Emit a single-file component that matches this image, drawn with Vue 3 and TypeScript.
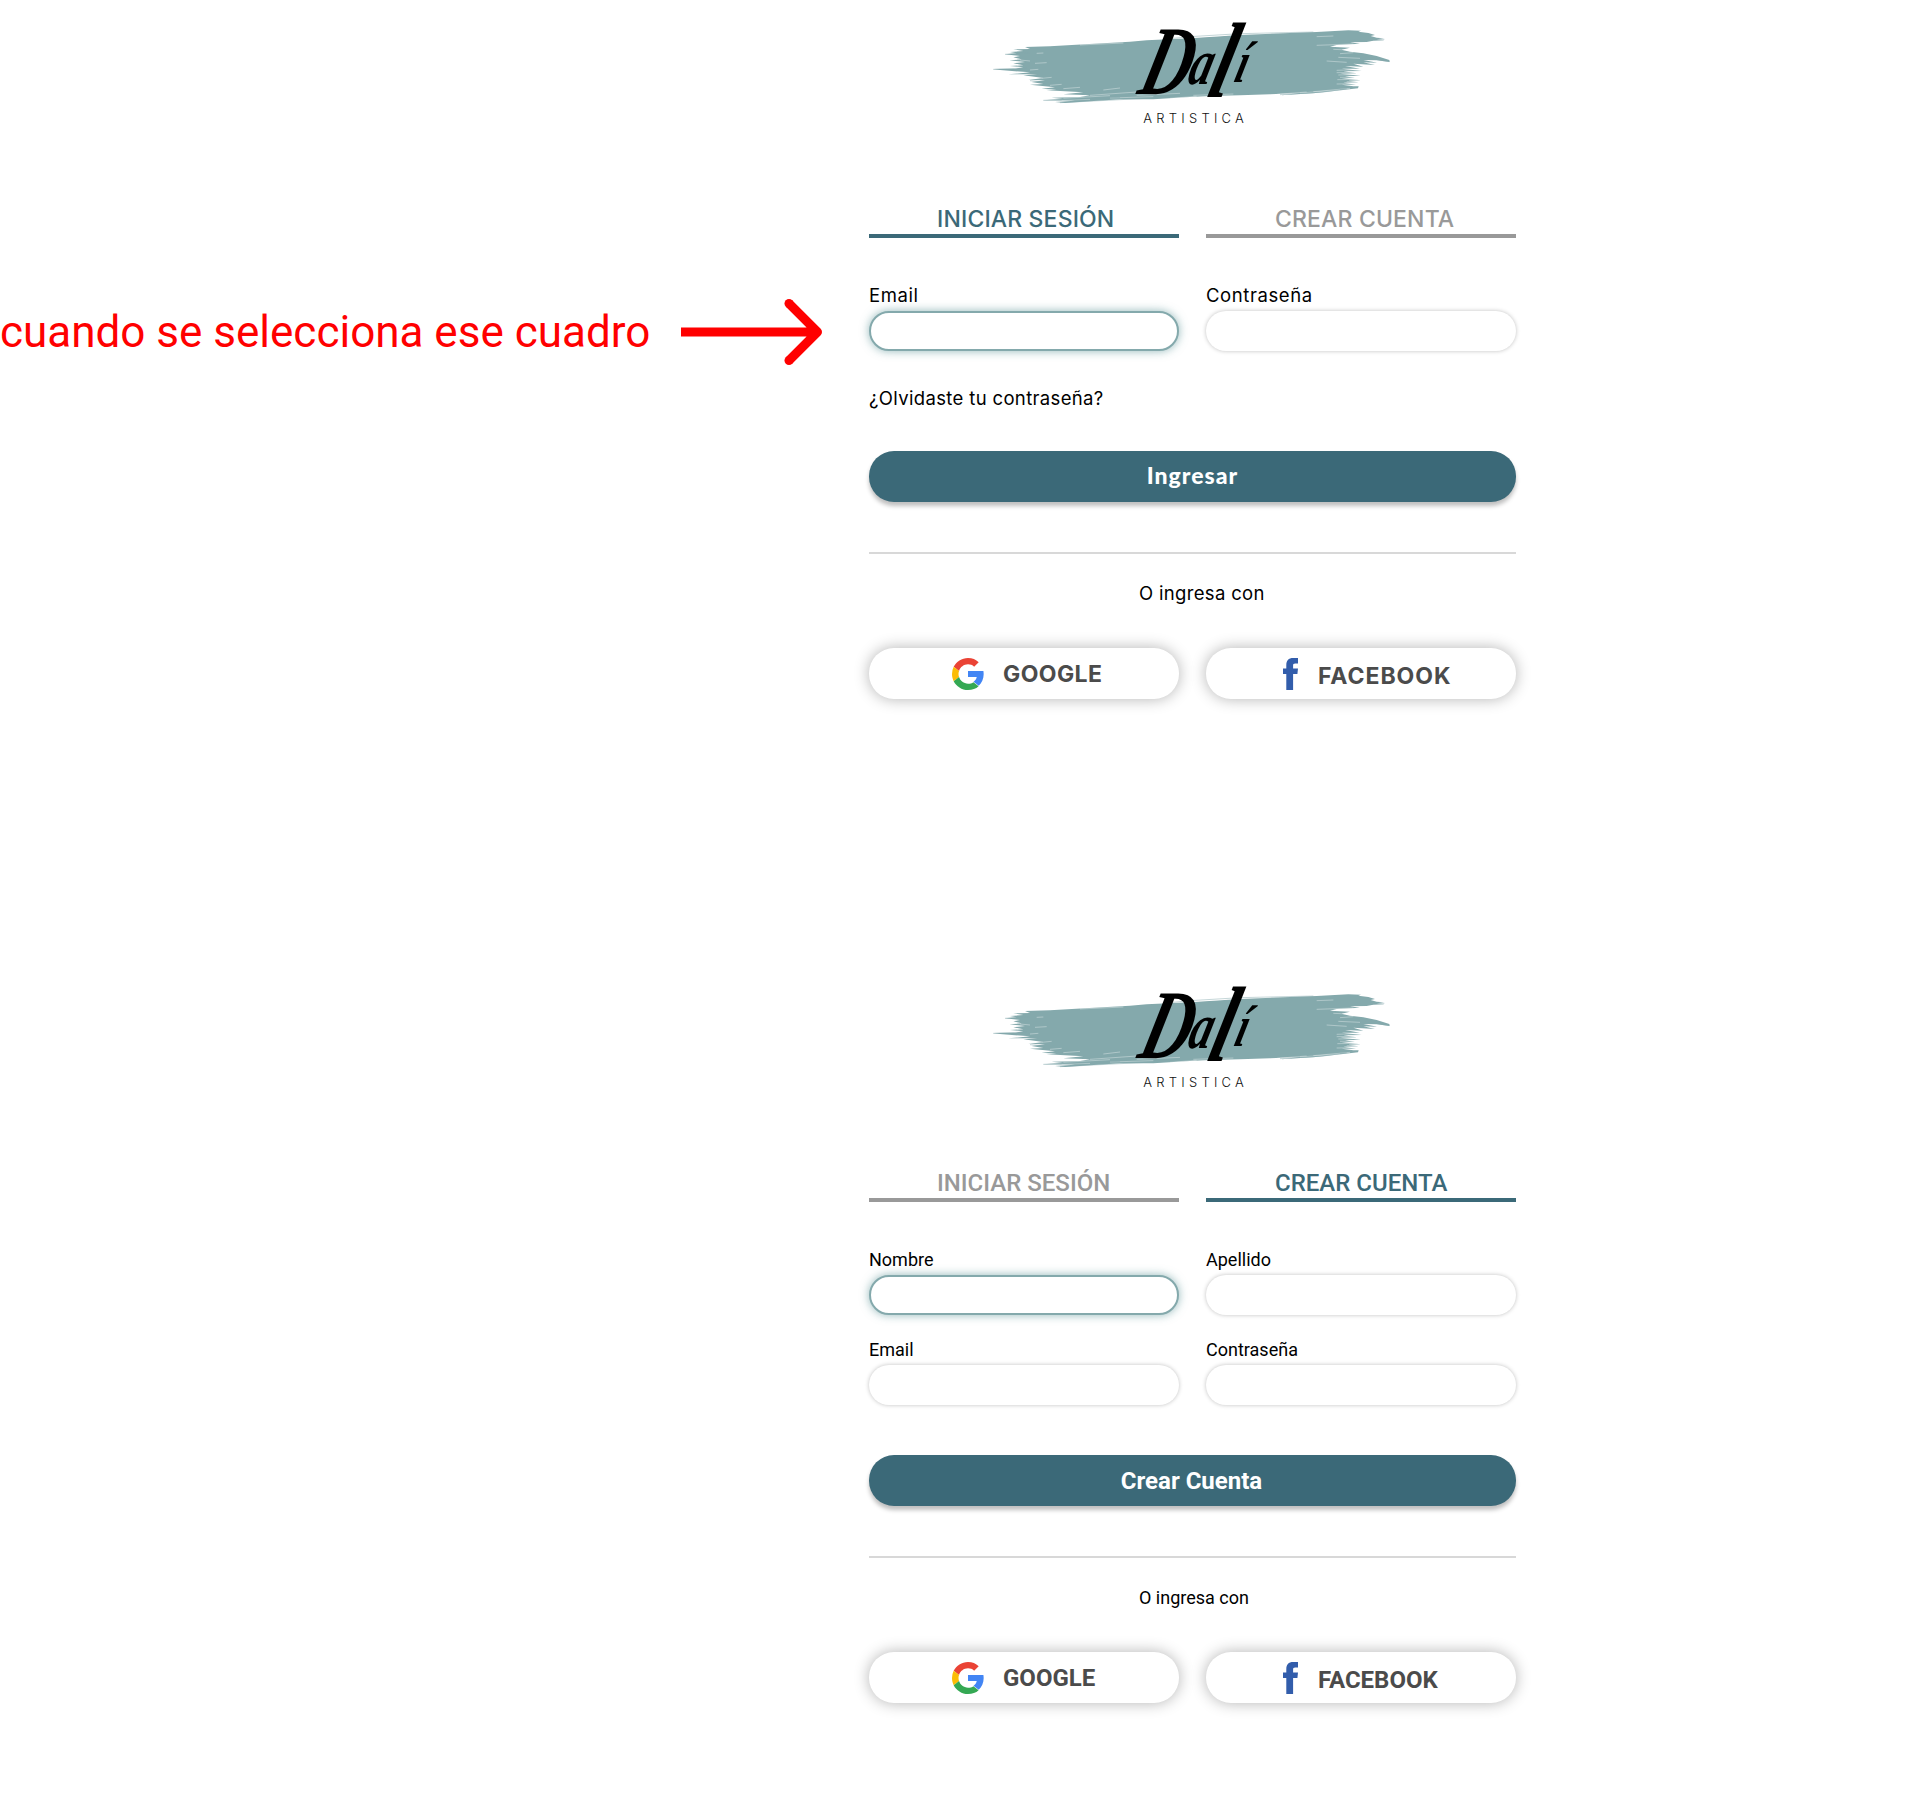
<script setup lang="ts">
import { h } from 'vue'

interface Field {
  label: string
  focused?: boolean
}

interface Form {
  id: string
  tabs: { label: string; active: boolean }[]
  fields: Field[]
  forgot?: string
  submit: string
}

const forms: Form[] = [
  {
    id: 'login',
    tabs: [
      { label: 'INICIAR SESIÓN', active: true },
      { label: 'CREAR CUENTA', active: false },
    ],
    fields: [{ label: 'Email', focused: true }, { label: 'Contraseña' }],
    forgot: '¿Olvidaste tu contraseña?',
    submit: 'Ingresar',
  },
  {
    id: 'signup',
    tabs: [
      { label: 'INICIAR SESIÓN', active: false },
      { label: 'CREAR CUENTA', active: true },
    ],
    fields: [
      { label: 'Nombre', focused: true },
      { label: 'Apellido' },
      { label: 'Email' },
      { label: 'Contraseña' },
    ],
    submit: 'Crear Cuenta',
  },
]

const brush =
  'M135 111L210 109L315 103L450 95L500 91L630 85L780 75L1010 66L1105 61L1143 62L1135 65L1165 69L1185 75L1172 78L1190 83L1212 85L1190 88L1214 91L1180 92L1160 96L1110 97L1140 101L1070 105L1050 110L1110 113L1085 119L1110 125L1150 130L1190 138L1228 150L1229 156L1190 151L1150 150L1192 158L1150 157L1185 165L1120 161L1150 170L1095 168L1140 176L1085 176L1145 183L1090 184L1130 190L1080 191L1142 197L1095 199L1125 204L1085 205L1142 211L1105 212L1135 217L1090 218L1128 224L1085 224L1120 229L1136 229L1134 235L1070 242L1000 250L900 256L960 249L870 253L780 256L690 258L630 261L520 268L420 268L330 274L255 279L225 276L285 272L188 271L250 267L215 263L300 261L330 256L250 253L310 247L200 241L230 239L185 236L225 232L150 224L190 222L155 216L195 211L145 210L190 204L130 196L172 193L85 193L150 187L60 180L38 177L105 176L130 172L90 168L130 166L100 160L135 156L88 151L125 148L100 142L120 138L75 133L110 130L90 126L130 123L100 118L150 117Z'

// Dry-bristle gaps scratched through the stroke.
const scratches =
  'M370 240L420 234M330 256L470 246M470 256L600 250M250 265L390 257M390 264L520 260M245 271L330 268M640 256L760 252M570 265L650 259M165 160L200 158M150 180L175 178M185 205L215 202M210 226L245 223M250 236L300 232M170 130L190 129M120 150L150 153M1010 106L1120 102M1060 118L1150 122M1080 131L1120 128M1040 153L1100 157M1075 142L1140 145M1070 181L1130 179M1070 188L1140 187M1075 195L1120 194M1080 202L1145 201M1072 209L1130 208M1100 215L1150 214M1070 222L1125 221M960 249L1080 240M1000 245L1110 235M890 253L980 246M630 82L740 76M1010 80L1060 78M300 105L430 99'

const wisps =
  'M560 87L630 80L780 71L1000 66M75 133L150 128M40 178L140 174M150 212L200 218M190 271L420 262M240 278L560 262M1090 91L1213 88M1100 236L1030 246L900 254M1140 140L1228 155'

// The wordmark and its brush stroke, shared by both forms.
const Logo = () =>
  h(
    'svg',
    {
      width: 420,
      height: 125,
      viewBox: '0 0 1260 375',
      overflow: 'visible',
      'aria-label': 'Dalí Artistica',
    },
    [
      h('path', { d: brush, fill: '#84a9ac' }),
      h('path', { d: scratches, stroke: '#fff', 'stroke-width': 1.6, opacity: 0.65, fill: 'none' }),
      h('path', { d: wisps, stroke: '#84a9ac', 'stroke-width': 1.8, opacity: 0.8, fill: 'none' }),
      h(
        'text',
        {
          transform: 'matrix(.7 0 -.27 1 68 0)',
          'font-family': '"Liberation Serif", serif',
          'font-weight': 700,
          'font-style': 'italic',
          fill: '#000',
        },
        [
          h('tspan', { x: 668, y: 252, 'font-size': 296 }, 'D'),
          h('tspan', { x: 872, y: 223, 'font-size': 195 }, 'a'),
          h('tspan', { x: 970, y: 262, 'font-size': 322 }, 'l'),
          h('tspan', { x: 1070, y: 217, 'font-size': 176 }, 'í'),
        ],
      ),
      h(
        'text',
        {
          x: 490,
          y: 338,
          'font-family': 'Inter, sans-serif',
          'font-size': 39,
          'font-weight': 300,
          'letter-spacing': 12.7,
          fill: '#111',
        },
        'ARTISTICA',
      ),
    ],
  )
</script>

<template>
  <div class="page">
    <aside class="note">
      <span class="note-text">cuando se selecciona ese cuadro</span>
      <svg class="arrow" width="146" height="70" viewBox="0 0 146 70">
        <path
          d="M0 35H136.5M108 6.5L136.5 35L108 63.5"
          fill="none"
          stroke="#f00"
          stroke-width="9"
          stroke-linejoin="round"
        />
        <circle cx="108" cy="6.5" r="4.5" fill="#f00" />
        <circle cx="108" cy="63.5" r="4.5" fill="#f00" />
      </svg>
    </aside>

    <main class="column">
      <section v-for="form in forms" :key="form.id" class="form" :class="form.id">
        <header class="logo"><Logo /></header>

        <nav class="tabs">
          <div v-for="tab in form.tabs" :key="tab.label" class="tab" :class="{ active: tab.active }">
            <span>{{ tab.label }}</span>
          </div>
        </nav>

        <div class="fields">
          <label v-for="field in form.fields" :key="field.label" class="field">
            <span class="label">{{ field.label }}</span>
            <input class="input" :class="{ focused: field.focused }" type="text" />
          </label>
        </div>

        <p v-if="form.forgot" class="forgot">{{ form.forgot }}</p>

        <button class="submit" type="button">{{ form.submit }}</button>

        <div class="divider"></div>
        <p class="with">O ingresa con</p>

        <div class="social">
          <button class="provider google" type="button">
            <svg width="32" height="32" viewBox="0 0 48 48">
              <path fill="#ea4335" d="M24 9.5c3.54 0 6.71 1.22 9.21 3.6l6.85-6.85C35.9 2.38 30.47 0 24 0 14.62 0 6.51 5.38 2.56 13.22l7.98 6.19C12.43 13.72 17.74 9.5 24 9.5z" />
              <path fill="#4285f4" d="M47.5 24.55c0-1.57-.15-3.09-.38-4.95H24v9.02h13.1c-.58 2.96-2.26 5.48-4.78 7.18l7.73 6c4.51-4.18 7.45-10.36 7.45-17.25z" />
              <path fill="#fbbc05" d="M10.53 28.59A14.5 14.5 0 0 1 9.77 24c0-1.6.27-3.14.76-4.59l-7.98-6.19A23.9 23.9 0 0 0 0 24c0 3.88.92 7.54 2.56 10.78z" />
              <path fill="#34a853" d="M24 48c6.48 0 11.93-2.13 15.89-5.81l-7.73-6c-2.15 1.45-4.92 2.3-8.16 2.3-6.26 0-11.57-4.22-13.47-9.91l-7.98 6.19C6.51 42.62 14.62 48 24 48z" />
            </svg>
            <span>GOOGLE</span>
          </button>
          <button class="provider facebook" type="button">
            <svg width="16" height="32" viewBox="0 0 16 32">
              <path fill="#325dab" d="M3.3 32V16H0v-5.500h3.300V7.200C3.300 2.700 5.200 0 10.400 0H15v5.500h-2.700C10.300 5.500 10.100 6.300 10.100 7.800v2.700H15L14.400 16h-4.300v16z" />
            </svg>
            <span>FACEBOOK</span>
          </button>
        </div>
      </section>
    </main>
  </div>
</template>

<style>
body {
  margin: 0;
  background: #fff;
}
</style>

<style scoped>
.page {
  display: flex;
  width: 1911px;
  height: 1800px;
  color: #000;
}
.note {
  box-sizing: border-box;
  flex: none;
  display: flex;
  align-items: center;
  width: 869px;
  height: 70px;
  margin-top: 297px;
  color: #f00;
  font-family: Roboto, sans-serif;
}
.note-text {
  width: 681px;
  font-size: 44px;
  line-height: 70px;
  white-space: nowrap;
}
.column {
  width: 647px;
  height: 1800px;
}
.form {
  display: flex;
  flex-direction: column;
  height: 964px;
  font-family: Inter, sans-serif;
  font-size: 18.5px;
  line-height: 27px;
}
.signup {
  height: 836px;
  font-family: Roboto, sans-serif;
  font-size: 18px;
}
.logo {
  flex: none;
  height: 190px;
  padding: 10px 0 0 111px;
}
.logo svg {
  display: block;
}
.tabs,
.fields,
.social {
  display: grid;
  grid-template-columns: 310px 310px;
  column-gap: 27px;
}
.tab {
  box-sizing: border-box;
  height: 38px;
  padding: 5px 0 0 68px;
  border-bottom: 4px solid #999;
  color: #999;
  font-size: 23px;
  font-weight: 500;
  line-height: 29px;
  white-space: nowrap;
}
.tab + .tab {
  padding-left: 69px;
}
.login .tab {
  letter-spacing: 0.15px;
}
.signup .tab {
  font-size: 24px;
}
.tab.active {
  border-color: #3b6978;
  color: #3b6978;
}
.fields {
  row-gap: 21px;
  margin-top: 44px;
}
.field {
  display: flex;
  flex-direction: column;
}
.label {
  margin-bottom: 2px;
}
.login .label {
  letter-spacing: 0.58px;
}
.input {
  box-sizing: border-box;
  width: 310px;
  height: 40px;
  padding: 0 18px;
  border: 0;
  border-radius: 20px;
  outline: 0;
  background: #fff;
  box-shadow: 0 0 4px rgba(0, 0, 0, 0.25);
}
.input.focused {
  border: 2px solid #84a9ac;
  box-shadow: 0 0 10px rgba(59, 125, 130, 0.55);
}
.forgot {
  margin: 34px 0 0;
  letter-spacing: 0.35px;
}
.submit {
  flex: none;
  height: 51px;
  margin-top: 39px;
  padding: 0 0 3px;
  border: 0;
  border-radius: 25px;
  background: #3b6978;
  box-shadow: 0 4px 4px rgba(0, 0, 0, 0.25);
  color: #fff;
  font-family: Lato, sans-serif;
  font-size: 23px;
  font-weight: 900;
  letter-spacing: 1px;
  line-height: 48px;
}
.signup .submit {
  margin-top: 50px;
  padding: 1px 2px 0 0;
  font-family: Roboto, sans-serif;
  font-size: 24px;
  font-weight: 700;
  letter-spacing: 0;
  line-height: 50px;
}
.divider {
  flex: none;
  height: 2px;
  margin-top: 50px;
  background: #d8d8d8;
}
.with {
  margin: 26px 0 41px;
  padding-left: 270px;
}
.login .with {
  letter-spacing: 0.33px;
}
.provider {
  display: flex;
  align-items: center;
  height: 51px;
  padding: 0;
  border: 0;
  border-radius: 25px;
  background: #fff;
  box-shadow: 0 0 15px rgba(0, 0, 0, 0.3);
  color: #4b4b4b;
  font-family: inherit;
  font-size: 23px;
  font-weight: 700;
  line-height: 49px;
}
.signup .provider {
  font-size: 24px;
}
.google {
  gap: 19px;
  padding-left: 83px;
}
.login .google {
  letter-spacing: 0.4px;
}
.facebook {
  gap: 19px;
  padding-left: 77px;
}
.login .facebook {
  letter-spacing: 0.95px;
}
.google span {
  padding-top: 1px;
}
.facebook span {
  padding-top: 5px;
}
</style>
